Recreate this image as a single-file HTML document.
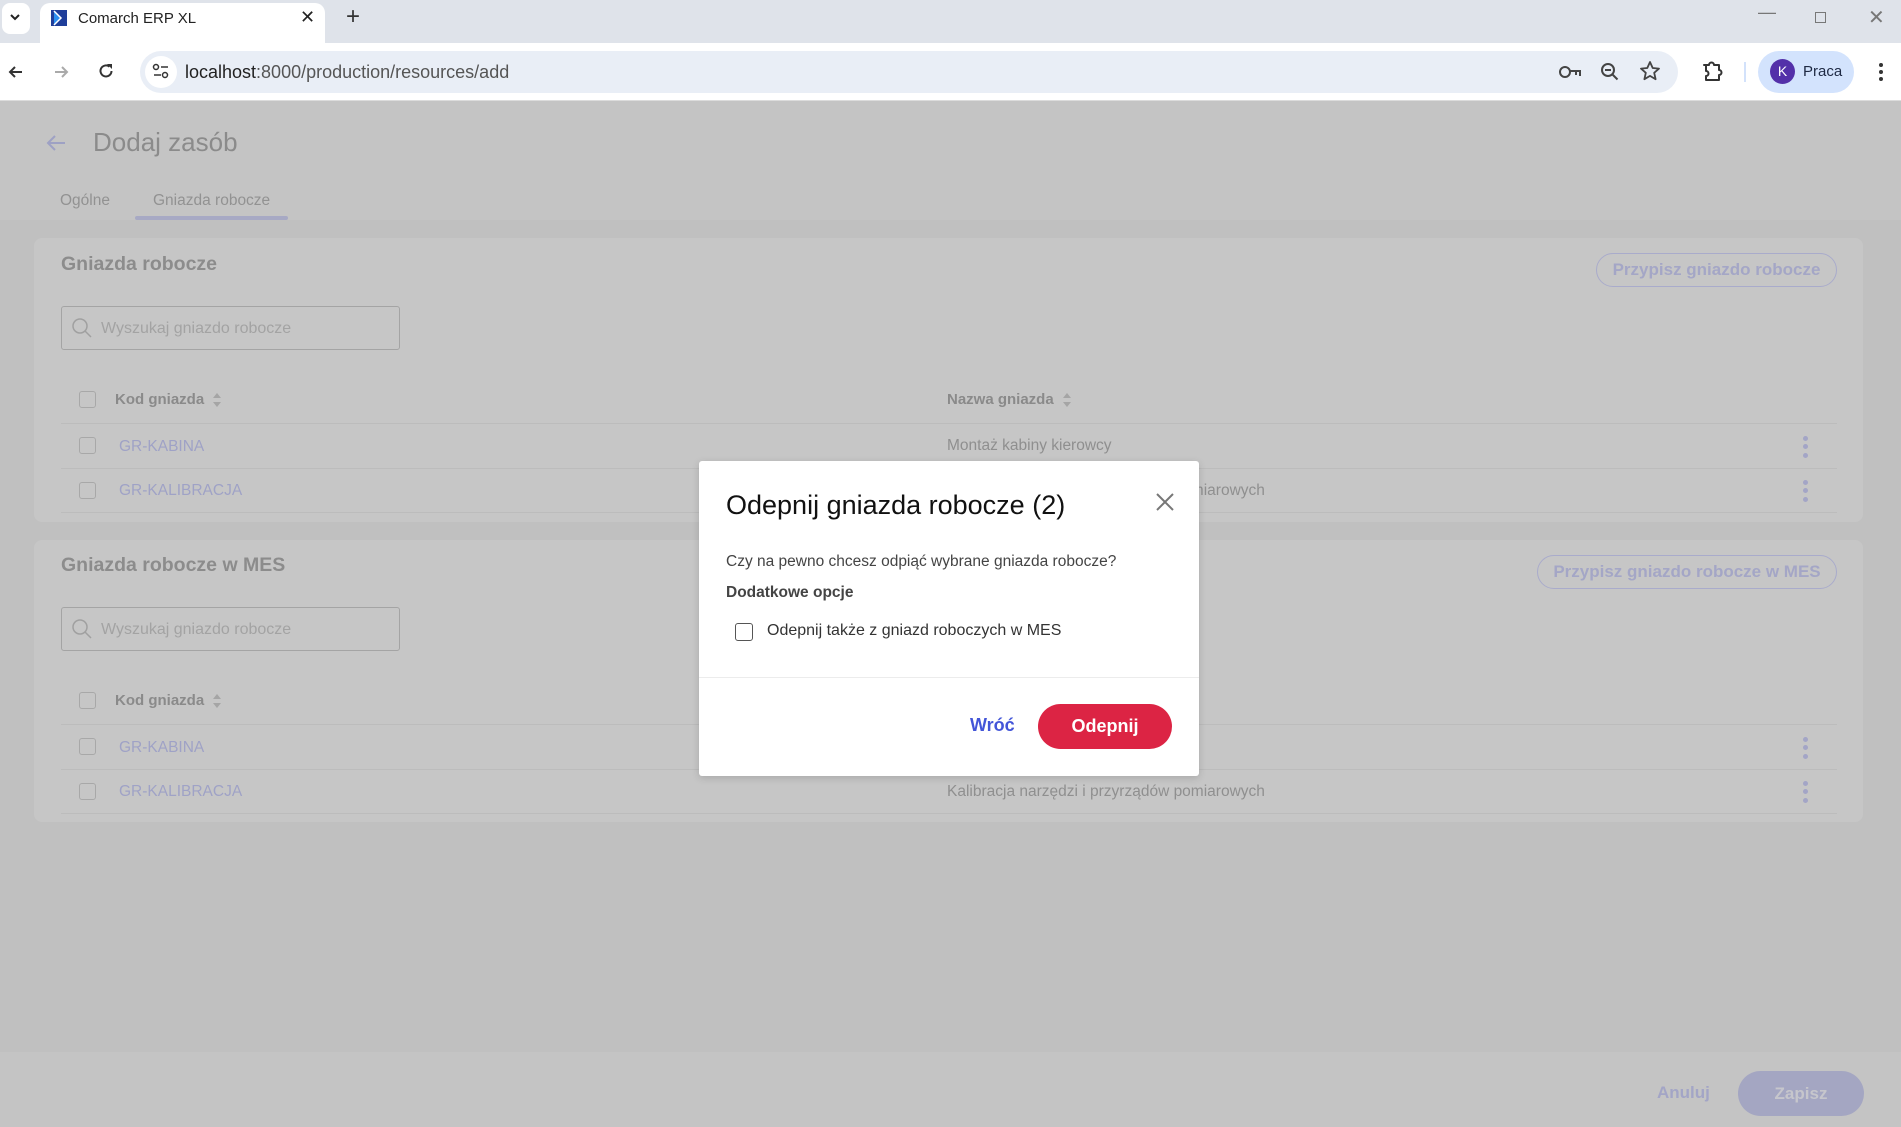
<!DOCTYPE html>
<html><head><meta charset="utf-8"><style>
*{box-sizing:border-box;margin:0;padding:0}
body{width:1901px;height:1127px;overflow:hidden;position:relative;font-family:"Liberation Sans",sans-serif;background:#c0c0c0}
.a{position:absolute}
.t{white-space:nowrap}
.cb{position:absolute;width:17px;height:17px;border:1.5px solid #a8a8a8;border-radius:3px}
.hd{color:#8a8a8a;font-size:15px;font-weight:bold}
.lk{color:#9fa2c6;font-size:15.5px}
.tx{color:#8f8f8f;font-size:15.5px}
.sep{position:absolute;height:1px;background:#bcbcbc}
.keb{position:absolute;width:5px;height:5px;border-radius:50%;background:#a3a5c6}
.so{display:inline-block;vertical-align:middle;margin-left:8px}
</style></head><body>
<!-- tab bar -->
<div class="a" style="left:0;top:0;width:1901px;height:43px;background:#dfe3ea"></div>
<div class="a" style="left:2px;top:3px;width:28px;height:31px;background:#fff;border-radius:8px"></div>
<svg class="a" style="left:8px;top:12px" width="14" height="10"><path d="M3 3l4 4 4-4" stroke="#222" stroke-width="2" fill="none"/></svg>
<div class="a" style="left:40px;top:3px;width:285px;height:40px;background:#fff;border-radius:10px 10px 0 0"></div>
<svg class="a" style="left:51px;top:10px" width="16" height="16"><rect width="16" height="16" fill="#1f3e9a"/><path d="M3 1l7 7-7 7" fill="#2d8ff0"/><path d="M3 1l7 7-7 7" stroke="#fff" stroke-width="1.5" fill="none"/></svg>
<div class="a t" style="left:78px;top:10px;font-size:15px;color:#222">Comarch ERP XL</div>
<div class="a t" style="left:300px;top:7px;font-size:18px;color:#222">✕</div>
<div class="a t" style="left:346px;top:3px;font-size:24px;color:#333">+</div>
<div class="a t" style="left:1758px;top:2px;font-size:18px;color:#777">—</div>
<div class="a" style="left:1815px;top:12px;width:11px;height:11px;border:1.3px solid #777"></div>
<div class="a t" style="left:1868px;top:5px;font-size:20px;color:#777">✕</div>
<!-- toolbar -->
<div class="a" style="left:0;top:43px;width:1901px;height:58px;background:#fff;border-bottom:1px solid #dcdcdc"></div>
<svg class="a" style="left:6px;top:62px" width="20" height="20"><path d="M16 10H4M9 5l-5 5 5 5" stroke="#333" stroke-width="2" fill="none"/></svg>
<svg class="a" style="left:51px;top:62px" width="20" height="20"><path d="M4 10h12M11 5l5 5-5 5" stroke="#aaa" stroke-width="2" fill="none"/></svg>
<svg class="a" style="left:96px;top:61px" width="20" height="20"><path d="M15.5 10a5.5 5.5 0 1 1-2-4.3" stroke="#333" stroke-width="2" fill="none"/><path d="M11 3h5v5z" fill="#333"/></svg>
<div class="a" style="left:140px;top:51px;width:1538px;height:42px;background:#e9eef6;border-radius:21px"></div>
<div class="a" style="left:145px;top:56px;width:32px;height:32px;background:#fff;border-radius:50%"></div>
<svg class="a" style="left:151px;top:62px" width="20" height="20"><circle cx="5" cy="5" r="2.5" stroke="#333" stroke-width="1.5" fill="none"/><path d="M10 5h7M3 13h7" stroke="#333" stroke-width="1.5"/><circle cx="14" cy="13" r="2.5" stroke="#333" stroke-width="1.5" fill="none"/></svg>
<div class="a t" style="left:185px;top:62px;font-size:18px;color:#222">localhost<span style="color:#555">:8000/production/resources/add</span></div>
<svg class="a" style="left:1558px;top:62px" width="24" height="20"><circle cx="7" cy="10" r="5" stroke="#444" stroke-width="2" fill="none"/><path d="M12 9h10v5M18 9v4" stroke="#444" stroke-width="2" fill="none"/></svg>
<svg class="a" style="left:1599px;top:61px" width="22" height="22"><circle cx="9" cy="9" r="6" stroke="#444" stroke-width="2" fill="none"/><path d="M6 9h6M13.5 13.5l5 5" stroke="#444" stroke-width="2"/></svg>
<svg class="a" style="left:1639px;top:60px" width="22" height="22"><path d="M11 2l2.7 6 6.3.6-4.8 4.2 1.4 6.4L11 15.9 5.4 19.2l1.4-6.4L2 8.6l6.3-.6z" stroke="#444" stroke-width="1.8" fill="none" stroke-linejoin="round"/></svg>
<svg class="a" style="left:1700px;top:60px" width="24" height="24"><path d="M4 5h5a2.5 2.5 0 0 1 5 0h5v5a2.5 2.5 0 0 1 0 5v5H6v-4a2.5 2.5 0 0 0 0-5V5z" stroke="#333" stroke-width="2" fill="none" stroke-linejoin="round"/></svg>
<div class="a" style="left:1744px;top:62px;width:2px;height:20px;background:#d3e2fb"></div>
<div class="a" style="left:1758px;top:51px;width:96px;height:42px;background:#d3e3fd;border-radius:21px"></div>
<div class="a" style="left:1770px;top:59px;width:25px;height:25px;background:#5330a9;border-radius:50%;color:#fff;font-size:14px;text-align:center;line-height:25px">K</div>
<div class="a t" style="left:1803px;top:63px;font-size:15px;color:#1f2a44">Praca</div>
<div class="a" style="left:1879px;top:63px;width:4px;height:4px;border-radius:50%;background:#333;box-shadow:0 7px 0 #333,0 14px 0 #333"></div>
<!-- page header -->
<div class="a" style="left:0;top:101px;width:1901px;height:119px;background:#c4c4c4"></div>
<svg class="a" style="left:44px;top:132px" width="24" height="22"><path d="M21 11H4M11 4l-7 7 7 7" stroke="#9ea1c4" stroke-width="2" fill="none"/></svg>
<div class="a t" style="left:93px;top:127px;font-size:26px;color:#8b8b8b">Dodaj zasób</div>
<div class="a t" style="left:60px;top:192px;font-size:15.5px;color:#929292">Ogólne</div>
<div class="a t" style="left:153px;top:192px;font-size:15.5px;color:#929292">Gniazda robocze</div>
<div class="a" style="left:135px;top:216px;width:153px;height:4px;background:#a7a9c4;border-radius:2px"></div>
<!-- card 1 -->
<div class="a" style="left:34px;top:238px;width:1829px;height:284px;background:#c6c6c6;border-radius:8px"></div>
<div class="a t" style="left:61px;top:253px;font-size:19.5px;font-weight:bold;color:#8c8c8c">Gniazda robocze</div>
<div class="a" style="left:1596px;top:253px;width:241px;height:34px;border:1.5px solid #a9abcb;border-radius:17px;color:#a4a6c6;font-size:17px;font-weight:bold;text-align:center;line-height:31px">Przypisz gniazdo robocze</div>
<div class="a" style="left:61px;top:306px;width:339px;height:44px;border:1.5px solid #a4a4a4;border-radius:3px"></div>
<svg class="a" style="left:70px;top:316px" width="24" height="24"><circle cx="10" cy="10" r="7" stroke="#a0a0a0" stroke-width="1.5" fill="none"/><path d="M15 15l6 6" stroke="#a0a0a0" stroke-width="1.5"/></svg>
<div class="a t" style="left:101px;top:320px;font-size:16px;color:#a3a3a3">Wyszukaj gniazdo robocze</div>
<div class="cb" style="left:79px;top:391px"></div>
<div class="a t hd" style="left:115px;top:391px">Kod gniazda<svg class="so" width="10" height="16"><path d="M1 6l4-5 4 5zM1 10l4 5 4-5z" fill="#a5a5a5"/></svg></div>
<div class="a t hd" style="left:947px;top:391px">Nazwa gniazda<svg class="so" width="10" height="16"><path d="M1 6l4-5 4 5zM1 10l4 5 4-5z" fill="#a5a5a5"/></svg></div>
<div class="sep" style="left:61px;top:423px;width:1776px"></div>
<div class="cb" style="left:79px;top:437px"></div>
<div class="a t lk" style="left:119px;top:438px">GR-KABINA</div>
<div class="a t tx" style="left:947px;top:437px">Montaż kabiny kierowcy</div>
<div class="keb" style="left:1803px;top:436px"></div><div class="keb" style="left:1803px;top:444px"></div><div class="keb" style="left:1803px;top:453px"></div>
<div class="sep" style="left:61px;top:468px;width:1776px"></div>
<div class="cb" style="left:79px;top:482px"></div>
<div class="a t lk" style="left:119px;top:482px">GR-KALIBRACJA</div>
<div class="a t tx" style="left:947px;top:482px">Kalibracja narzędzi i przyrządów pomiarowych</div>
<div class="keb" style="left:1803px;top:480px"></div><div class="keb" style="left:1803px;top:488px"></div><div class="keb" style="left:1803px;top:497px"></div>
<div class="sep" style="left:61px;top:512px;width:1776px"></div>
<!-- card 2 -->
<div class="a" style="left:34px;top:540px;width:1829px;height:282px;background:#c6c6c6;border-radius:8px"></div>
<div class="a t" style="left:61px;top:554px;font-size:19.5px;font-weight:bold;color:#8c8c8c">Gniazda robocze w MES</div>
<div class="a" style="left:1537px;top:555px;width:300px;height:34px;border:1.5px solid #a9abcb;border-radius:17px;color:#a4a6c6;font-size:17px;font-weight:bold;text-align:center;line-height:31px">Przypisz gniazdo robocze w MES</div>
<div class="a" style="left:61px;top:607px;width:339px;height:44px;border:1.5px solid #a4a4a4;border-radius:3px"></div>
<svg class="a" style="left:70px;top:617px" width="24" height="24"><circle cx="10" cy="10" r="7" stroke="#a0a0a0" stroke-width="1.5" fill="none"/><path d="M15 15l6 6" stroke="#a0a0a0" stroke-width="1.5"/></svg>
<div class="a t" style="left:101px;top:621px;font-size:16px;color:#a3a3a3">Wyszukaj gniazdo robocze</div>
<div class="cb" style="left:79px;top:692px"></div>
<div class="a t hd" style="left:115px;top:692px">Kod gniazda<svg class="so" width="10" height="16"><path d="M1 6l4-5 4 5zM1 10l4 5 4-5z" fill="#a5a5a5"/></svg></div>
<div class="sep" style="left:61px;top:724px;width:1776px"></div>
<div class="cb" style="left:79px;top:738px"></div>
<div class="a t lk" style="left:119px;top:739px">GR-KABINA</div>
<div class="keb" style="left:1803px;top:737px"></div><div class="keb" style="left:1803px;top:745px"></div><div class="keb" style="left:1803px;top:754px"></div>
<div class="sep" style="left:61px;top:769px;width:1776px"></div>
<div class="cb" style="left:79px;top:783px"></div>
<div class="a t lk" style="left:119px;top:783px">GR-KALIBRACJA</div>
<div class="a t tx" style="left:947px;top:783px">Kalibracja narzędzi i przyrządów pomiarowych</div>
<div class="keb" style="left:1803px;top:781px"></div><div class="keb" style="left:1803px;top:789px"></div><div class="keb" style="left:1803px;top:798px"></div>
<div class="sep" style="left:61px;top:813px;width:1776px"></div>
<!-- footer -->
<div class="a" style="left:0;top:1052px;width:1901px;height:75px;background:#c4c4c4"></div>
<div class="a t" style="left:1657px;top:1083px;font-size:17px;font-weight:bold;color:#a3a5c6">Anuluj</div>
<div class="a" style="left:1738px;top:1071px;width:126px;height:45px;background:#a4a6c2;border-radius:23px;color:#c6c6cc;font-size:17px;font-weight:bold;text-align:center;line-height:45px">Zapisz</div>
<!-- modal -->
<div class="a" style="left:699px;top:461px;width:500px;height:315px;background:#fff;border-radius:3px;box-shadow:0 2px 8px rgba(0,0,0,.15)"></div>
<div class="a t" style="left:726px;top:490px;font-size:27px;color:#111">Odepnij gniazda robocze (2)</div>
<svg class="a" style="left:1156px;top:493px" width="18" height="18"><path d="M1 1l16 16M17 1L1 17" stroke="#777" stroke-width="2"/></svg>
<div class="a t" style="left:726px;top:553px;font-size:15.5px;color:#444">Czy na pewno chcesz odpiąć wybrane gniazda robocze?</div>
<div class="a t" style="left:726px;top:584px;font-size:15.5px;font-weight:bold;color:#444">Dodatkowe opcje</div>
<div class="a" style="left:735px;top:623px;width:18px;height:18px;border:1.5px solid #555;border-radius:3px"></div>
<div class="a t" style="left:767px;top:622px;font-size:16px;color:#333">Odepnij także z gniazd roboczych w MES</div>
<div class="a" style="left:699px;top:677px;width:500px;height:1px;background:#ececec"></div>
<div class="a t" style="left:970px;top:715px;font-size:18px;font-weight:bold;color:#4355d8">Wróć</div>
<div class="a" style="left:1038px;top:704px;width:134px;height:45px;background:#dc2444;border-radius:23px;color:#fff;font-size:18px;font-weight:bold;text-align:center;line-height:45px">Odepnij</div>
</body></html>
